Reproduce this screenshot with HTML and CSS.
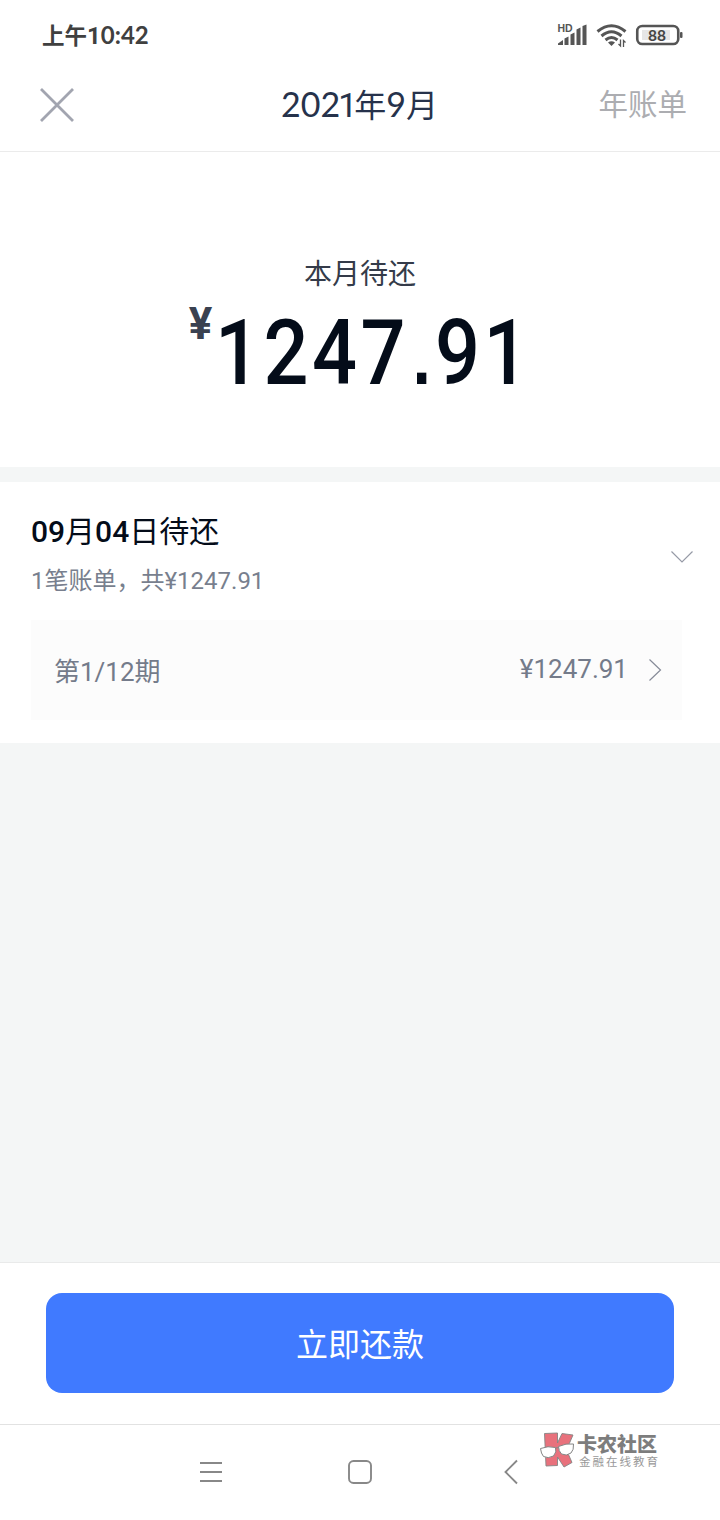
FILE: index.html
```html
<!DOCTYPE html>
<html lang="zh-CN">

<head>
    <meta charset="UTF-8">
    <title>2021年9月账单</title>
    <link rel="stylesheet" href="styles.css">
</head>

<body>
    <div id="screen">
        <!-- status bar -->
        <div class="statusBar">
            <span class="time">上午<span class="digits"><span class="one">1</span>0:42</span></span>
            <svg class="statusIcons" width="130" height="30" viewBox="0 0 130 30">
                <text class="hd" x="4.500" y="11.500">HD</text>
                <g fill="#555">
                    <path d="M5 25 V23.500 L10 20 V25 Z" />
                    <path d="M11.500 18.500 L15.500 16.500 V25 H11.500 Z" />
                    <path d="M17.500 14.500 L21.500 12.500 V25 H17.500 Z" />
                    <path d="M23.500 9.500 L27.500 7.500 V25 H23.500 Z" />
                    <path d="M29.500 6 L33.500 4.500 V25 H29.500 Z" />
                </g>
                <g fill="none" stroke="#555" stroke-width="3">
                    <path d="M44.500 11.500 Q58.500 0 72.500 11.500" />
                    <path d="M48.500 16 Q58.500 7.500 68.500 16" />
                    <path d="M52.500 20 Q58.500 15 64.500 20" />
                </g>
                <path d="M55 22.500 Q58.500 20 62 22.500 L58.500 26 Z" fill="#555" />
                <path d="M67.500 19.500 V26 L65.500 24 M70.500 27 V20.500 L72.500 22.500" fill="none" stroke="#555" stroke-width="1.300" />
                <rect x="84.250" y="6" width="41" height="18" rx="5" fill="none" stroke="#555" stroke-width="2.600" />
                <rect x="89" y="10" width="28" height="10" fill="#e6e6e6" />
                <rect x="127" y="12" width="2.500" height="6" rx="1" fill="#555" />
                <text class="battery" x="104" y="20.500" text-anchor="middle">88</text>
            </svg>
        </div>

        <!-- title bar -->
        <div class="titleBar">
            <svg class="close" width="34" height="34" viewBox="0 0 34 34">
                <path d="M1 1 L33 33 M33 1 L1 33" fill="none" stroke="#a2a5b0" stroke-width="2.800" />
            </svg>
            <h1 class="title"><span class="digits">202<span class="one">1</span></span>年<span class="digits">9</span>月</h1>
            <a class="yearBill">年账单</a>
        </div>

        <!-- amount due this month -->
        <div class="summary">
            <div class="summaryLabel">本月待还</div>
            <div class="total"><span class="yen">¥</span><span class="amount">1247<span class="dot">.</span>91</span></div>
        </div>

        <!-- bill list -->
        <div class="bill">
            <div class="billHead">
                <div>
                    <div class="billDate"><b>09</b>月<b>04</b>日待还</div>
                    <div class="billInfo">1笔账单，共¥1247.91</div>
                </div>
                <svg class="down" width="24" height="14" viewBox="0 0 24 14">
                    <path d="M1.500 1.500 L12 12 L22.500 1.500" fill="none" stroke="#969aa6" stroke-width="1.200" />
                </svg>
            </div>
            <div class="period">
                <span class="periodName">第1/12期</span>
                <span class="periodAmount">¥1247.91</span>
                <svg width="14" height="24" viewBox="0 0 14 24">
                    <path d="M1.500 1.500 L12.500 12 L1.500 22.500" fill="none" stroke="#868b98" stroke-width="1.200" />
                </svg>
            </div>
        </div>

        <div class="payBar">
            <button class="payButton">立即还款</button>
        </div>

        <!-- system navigation -->
        <div class="navBar">
            <svg width="22" height="22" viewBox="0 0 22 22">
                <path d="M0 2 H22 M0 11 H22 M0 20 H22" stroke="#888" stroke-width="1.800" />
            </svg>
            <svg width="24" height="24" viewBox="0 0 24 24">
                <rect x="1" y="1" width="22" height="22" rx="4.500" fill="none" stroke="#888" stroke-width="1.900" />
            </svg>
            <svg width="14" height="26" viewBox="0 0 14 26">
                <path d="M13 1.500 L1.500 13 L13 24.500" fill="none" stroke="#888" stroke-width="1.900" />
            </svg>
            <div class="watermark">
                <svg width="35" height="38" viewBox="0 0 35 38">
                    <path d="M4.500 2.500 L17.500 2 L17.500 12 L22 2.500 L33 4 L26.500 19 L32 31.500 L24 36 L17.500 26 L17.500 34.500 L6 35 Z" fill="#e8717c" stroke="#858585" stroke-width="0.900" />
                    <g fill="#fff" stroke="#858585" stroke-width="1">
                        <path d="M0.500 17.500 Q8 14.500 15.500 16.500 Q17 21 13.500 25 Q8 28 3.500 25.500 Q1 22.500 0.500 17.500 Z" />
                        <path d="M18.500 15.500 Q26 12 33.500 13 Q34 19 31 22 Q26.500 25.500 21.500 23 Q18.500 20 18.500 15.500 Z" />
                        <path d="M15.500 17.500 Q17 16 18.500 17" fill="none" />
                    </g>
                </svg>
                <div>
                    <div class="brand">卡农社区</div>
                    <div class="slogan">金融在线教育</div>
                </div>
            </div>
        </div>
    </div>
</body>

</html>
```
FILE: styles.css
```css
body {
    margin: 0;
    font-family: Roboto, "Noto Sans CJK SC", sans-serif;
    background: #fff;
}

svg {
    display: block;
    flex: none;
}

#screen {
    display: flex;
    flex-direction: column;
    width: 720px;
    height: 1520px;
    overflow: hidden;
    background: #f4f6f6;
}

.statusBar {
    display: flex;
    justify-content: space-between;
    height: 60px;
    padding: 19px 36px 0 42px;
    box-sizing: border-box;
    background: #fff;
}

.time {
    height: 30px;
    line-height: 30px;
    font-family: "Noto Sans CJK SC", sans-serif;
    font-size: 22.500px;
    font-weight: bold;
    color: #404040;
}

.digits {
    font-family: Lato, sans-serif;
}

.one {
    font-family: Roboto, sans-serif;
}

.time .digits {
    font-size: 24px;
}

.statusIcons {
    margin: 1px 1px 0 0;
}

.hd {
    font: bold 10.500px "Liberation Sans", sans-serif;
    fill: #555;
}

.battery {
    font: bold 15.500px Lato, sans-serif;
    fill: #444;
}

.titleBar {
    display: grid;
    grid-template-columns: 120px 1fr 120px;
    height: 92px;
    padding: 0 33px 0 40px;
    box-sizing: border-box;
    border-bottom: 1px solid #ebebeb;
    background: #fff;
}

.close {
    margin-top: 28px;
}

.title {
    margin: 0;
    padding: 19px 8px 0 0;
    line-height: 50px;
    font-size: 32px;
    font-weight: normal;
    text-align: center;
    white-space: nowrap;
    color: #26324b;
}

.title .digits {
    font-size: 34px;
}

.title .one {
    margin: 0 -1px 0 -2px;
    letter-spacing: -2px;
}

.yearBill {
    padding-top: 20px;
    line-height: 51px;
    font-size: 29.500px;
    text-align: right;
    color: #acadb1;
}

.summary {
    height: 315px;
    padding-top: 103px;
    box-sizing: border-box;
    text-align: center;
    background: #fff;
}

.summaryLabel {
    line-height: 40px;
    font-size: 28px;
    color: #343b49;
}

.total {
    display: flex;
    padding-left: 186px;
    line-height: 116px;
}

.yen {
    width: 29px;
    line-height: 58px;
    font-size: 44px;
    font-weight: bold;
    color: #3a4150;
}

.amount {
    font-size: 91px;
    font-weight: 500;
    letter-spacing: 4px;
    color: #040c19;
    transform: scaleX(0.87);
    transform-origin: left;
}

.dot {
    margin: 0 1px 0 4px;
    font-family: "Liberation Sans", sans-serif;
    font-size: 76px;
    font-weight: bold;
}

.bill {
    height: 261px;
    margin-top: 15px;
    padding: 28px 38px 0 31px;
    box-sizing: border-box;
    background: #fff;
}

.billHead {
    display: flex;
    justify-content: space-between;
    height: 110px;
}

.billDate {
    line-height: 44px;
    font-size: 30px;
    color: #040c19;
}

.billDate b {
    font-weight: 500;
}

.billInfo {
    margin-top: 9px;
    line-height: 36px;
    font-size: 24px;
    color: #787f8e;
}

.down {
    margin: 40px -12px 0 0;
}

.period {
    display: flex;
    align-items: center;
    height: 100px;
    padding: 0 20px 0 23px;
    box-sizing: border-box;
    font-size: 26px;
    color: #747b8a;
    background: #fcfcfc;
}

.periodName {
    flex: 1;
    padding-bottom: 1px;
}

.periodAmount {
    margin-right: 20px;
    padding-bottom: 2px;
}

.payBar {
    height: 162px;
    margin-top: auto;
    padding: 30px 46px 0;
    box-sizing: border-box;
    border-top: 1px solid #e9eaea;
    background: #fff;
}

.payButton {
    display: block;
    width: 628px;
    height: 100px;
    padding: 0 0 2px;
    border: 0;
    border-radius: 16px;
    font-family: inherit;
    font-size: 32px;
    color: #fff;
    background: #407aff;
}

.navBar {
    display: flex;
    height: 96px;
    padding-left: 200px;
    box-sizing: border-box;
    border-top: 1px solid #e2e2e2;
    background: #fff;
}

.navBar > svg {
    margin: 36px 126px 0 0;
}

.navBar > svg + svg {
    margin: 35px 132px 0 0;
}

.navBar > svg + svg + svg {
    margin: 34px 22px 0 0;
}

.watermark {
    display: flex;
    gap: 2px;
    padding-top: 6px;
    white-space: nowrap;
}

.brand {
    line-height: 28px;
    font-size: 20px;
    font-weight: 900;
    color: #7d7d7d;
}

.slogan {
    margin-left: 2px;
    line-height: 6px;
    font-size: 11.500px;
    letter-spacing: 2px;
    color: #999;
}
```
